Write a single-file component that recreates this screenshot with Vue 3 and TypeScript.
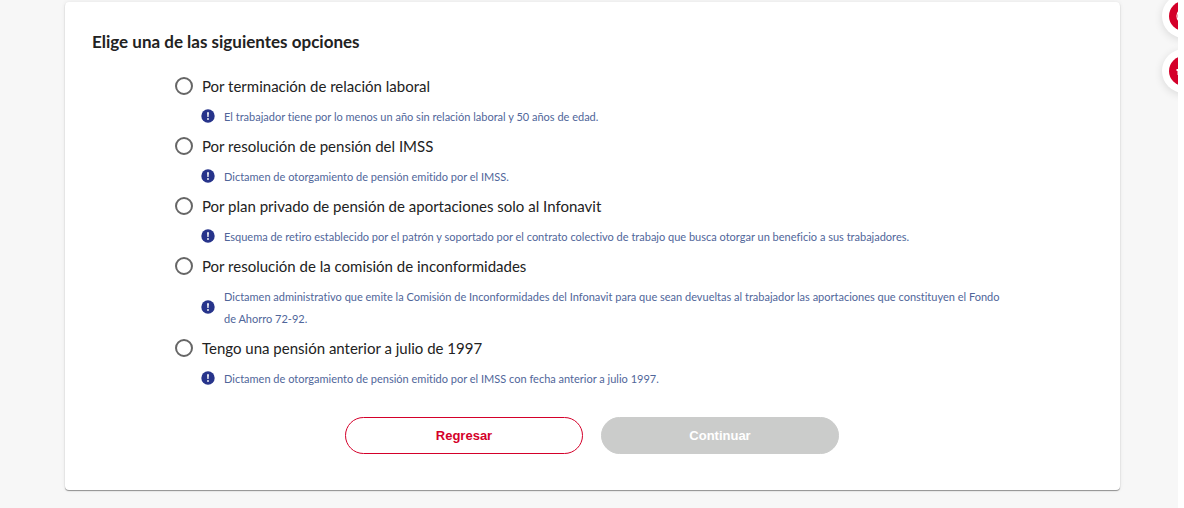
<script setup lang="ts">
import { ref } from 'vue'

interface Option {
  id: string
  label: string
  note: string
}

const options: Option[] = [
  { id: 'terminacion', label: 'Por terminación de relación laboral', note: 'El trabajador tiene por lo menos un año sin relación laboral y 50 años de edad.' },
  { id: 'pension-imss', label: 'Por resolución de pensión del IMSS', note: 'Dictamen de otorgamiento de pensión emitido por el IMSS.' },
  { id: 'plan-privado', label: 'Por plan privado de pensión de aportaciones solo al Infonavit', note: 'Esquema de retiro establecido por el patrón y soportado por el contrato colectivo de trabajo que busca otorgar un beneficio a sus trabajadores.' },
  { id: 'comision', label: 'Por resolución de la comisión de inconformidades', note: 'Dictamen administrativo que emite la Comisión de Inconformidades del Infonavit para que sean devueltas al trabajador las aportaciones que constituyen el Fondo de Ahorro 72-92.' },
  { id: 'anterior-1997', label: 'Tengo una pensión anterior a julio de 1997', note: 'Dictamen de otorgamiento de pensión emitido por el IMSS con fecha anterior a julio 1997.' },
]

const selected = ref('')
</script>

<template>
  <div class="page">
    <main class="card">
      <h1 id="title" class="title">Elige una de las siguientes opciones</h1>
      <div class="options" role="radiogroup" aria-labelledby="title">
        <div v-for="option in options" :key="option.id" class="option">
          <label class="choice" :for="option.id">
            <input :id="option.id" v-model="selected" class="radio" type="radio" name="motivo" :value="option.id" :aria-describedby="`${option.id}-note`" />
            {{ option.label }}
          </label>
          <div class="note">
            <svg class="info" viewBox="0 0 14 14" aria-hidden="true">
              <circle cx="7" cy="7" r="6.7" fill="#27348b" />
              <path d="M6.1 3.2h1.8L7.6 8H6.4z" fill="#fff" />
              <circle cx="7" cy="10" r="0.9" fill="#fff" />
            </svg>
            <p :id="`${option.id}-note`" class="note-text">{{ option.note }}</p>
          </div>
        </div>
      </div>
      <div class="actions">
        <button class="button back" type="button">Regresar</button>
        <button class="button next" type="button" :disabled="!selected">Continuar</button>
      </div>
    </main>
    <aside class="shortcuts">
      <button class="shortcut" type="button" aria-label="Ayuda">
        <svg viewBox="0 0 30 30" aria-hidden="true">
          <circle cx="15" cy="15" r="15" fill="#d4002a" />
          <circle cx="15" cy="15" r="7" fill="none" stroke="#fff" stroke-width="1.2" />
        </svg>
      </button>
      <button class="shortcut" type="button" aria-label="Chat">
        <svg viewBox="0 0 30 30" aria-hidden="true">
          <circle cx="15" cy="15" r="15" fill="#d4002a" />
          <path d="M7.5 13h14v6h-13v-4h-1z" fill="#fff" />
        </svg>
      </button>
    </aside>
  </div>
</template>

<style>
body {
  margin: 0;
  background: #fff;
}
</style>

<style scoped>
.page {
  position: relative;
  box-sizing: border-box;
  min-height: 100vh;
  margin-right: 6px;
  padding: 2px 58px 18px 65px;
  overflow: hidden;
  background: #f7f7f7;
  color: #222;
  font-family: Lato, "Open Sans", sans-serif;
  font-variant-ligatures: none;
}

.card {
  padding: 28px 28px 36px 27px;
  border-radius: 4px;
  background: #fff;
  box-shadow: 0 1px 1px rgba(0, 0, 0, 0.4), 0 0 4px rgba(0, 0, 0, 0.08);
}

.title {
  margin: 0;
  font-size: 17px;
  font-weight: 700;
  line-height: 24px;
}

.options {
  padding: 14px 80px 0 83px;
}

.choice {
  display: flex;
  align-items: center;
  gap: 9px;
  height: 35px;
  font-size: 15px;
}

.radio {
  appearance: none;
  box-sizing: border-box;
  flex: none;
  width: 18px;
  height: 18px;
  margin: 0;
  border: 2px solid #666;
  border-radius: 50%;
  background: #fff;
}

.radio:checked {
  background: radial-gradient(#d4002a 45%, #fff 50%);
}

.note {
  display: flex;
  align-items: center;
  gap: 9px;
  padding-left: 26px;
  color: #50669a;
  font-size: 11px;
  line-height: 22px;
}

.info {
  flex: none;
  width: 14px;
  height: 14px;
}

.note-text {
  margin: 0;
  padding-top: 3px;
}

.actions {
  display: flex;
  justify-content: center;
  gap: 18px;
  margin-top: 27px;
}

.button {
  box-sizing: border-box;
  width: 238px;
  height: 37px;
  border: 1px solid #d4002a;
  border-radius: 20px;
  background: #fff;
  color: #d4002a;
  font: bold 13px "Liberation Sans", sans-serif;
}

.next {
  border-color: #cbcccb;
  background: #cbcccb;
  color: #fff;
}

.shortcuts {
  position: absolute;
  top: -6px;
  right: -28px;
  display: grid;
  gap: 11px;
}

.shortcut {
  box-sizing: border-box;
  width: 44px;
  height: 44px;
  padding: 7px;
  border: 0;
  border-radius: 50%;
  background: #fff;
  box-shadow: 0 2px 8px rgba(0, 0, 0, 0.12);
}

.shortcut svg {
  display: block;
}
</style>
